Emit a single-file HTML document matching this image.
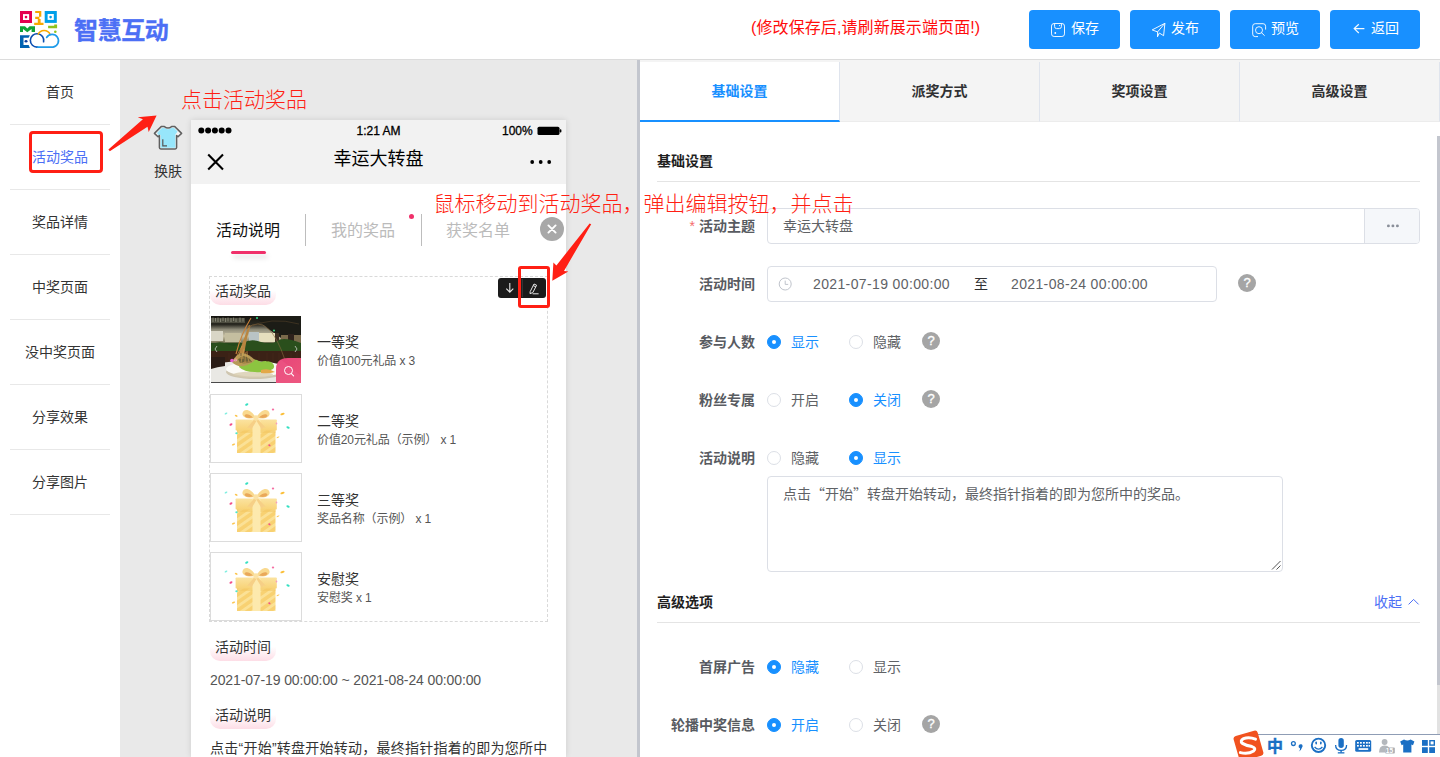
<!DOCTYPE html>
<html lang="zh-CN">
<head>
<meta charset="utf-8">
<title>智慧互动</title>
<style>
*{box-sizing:border-box;margin:0;padding:0}
html,body{width:1440px;height:757px;overflow:hidden;background:#fff}
body{font-family:"Liberation Sans","Noto Sans CJK SC",sans-serif;font-size:14px;color:#333;position:relative}
.abs{position:absolute}
/* header */
#hdr{position:absolute;left:0;top:0;width:1440px;height:60px;background:#fff;border-bottom:1px solid #dcdcdc}
#brand{position:absolute;left:74px;top:12px;height:38px;line-height:38px;font-size:24px;font-weight:700;color:#4c6ff5;letter-spacing:-0.4px;white-space:nowrap;-webkit-text-stroke:.35px #4c6ff5}
#tip{position:absolute;left:751px;top:17px;font-size:16px;line-height:22px;color:#ff0c0c;white-space:nowrap;letter-spacing:.1px}
.btn{position:absolute;top:10px;height:39px;width:90px;background:#1890ff;border-radius:4px;color:#fff;font-size:14px;line-height:36px;white-space:nowrap}
.btn svg{position:absolute;top:12px}
.btn span{position:absolute;top:0}
/* sidebar */
#side{position:absolute;left:0;top:60px;width:120px;height:697px;background:#fff}
#side .it{position:absolute;left:10px;width:100px;height:65px;border-bottom:1px solid #e8e8e8;text-align:center;line-height:64px;font-size:14px;color:#333;white-space:nowrap}
#side .it.on{color:#4c6ff5}
/* stage */
#stage{position:absolute;left:120px;top:60px;width:517px;height:697px;background:#e9e9e9}
#bar{position:absolute;left:637px;top:60px;width:3px;height:697px;background:#c3c6ce}
/* phone */
#phone{position:absolute;left:191px;top:120px;width:375px;height:637px;background:#fff;box-shadow:0 0 6px rgba(0,0,0,.12);overflow:hidden}
#ptop{position:absolute;left:0;top:0;width:375px;height:64px;background:#f2f2f2}
/* right panel */
#panel{position:absolute;left:640px;top:60px;width:800px;height:697px;background:#fff;overflow:hidden}
.tab{position:absolute;top:2px;width:200px;height:60px;background:#f4f4f4;border-right:1px solid #dfe4ed;border-bottom:1px solid #ececec;text-align:center;line-height:59px;font-size:14px;font-weight:700;color:#303133}
.tab.on{background:#fff;color:#1890ff;border-bottom:2px solid #1890ff}
.sec{position:absolute;left:17px;width:763px;border-bottom:1px solid #e4e4e4;font-size:14px;font-weight:700;color:#1f1f1f}
.lbl{position:absolute;left:0;width:115px;text-align:right;font-size:14px;font-weight:700;color:#585b61;line-height:20px;white-space:nowrap}
.rad{position:absolute;width:14px;height:14px;border-radius:50%;border:1px solid #dcdfe6;background:#fff}
.rad.on{border-color:#1890ff;background:#1890ff}
.rad.on:after{content:"";position:absolute;left:4px;top:4px;width:4px;height:4px;border-radius:50%;background:#fff}
.rl{position:absolute;font-size:14px;line-height:20px;color:#606266;white-space:nowrap}
.rl.on{color:#1890ff}
.q{position:absolute;width:18px;height:18px;border-radius:50%;background:#a5a5a5;color:#fff;font-size:13px;font-weight:400;-webkit-text-stroke:.3px #fff;text-align:center;line-height:18px}
.ptab{position:absolute;top:99px;font-size:16px;line-height:24px;white-space:nowrap}
.pill{position:absolute;height:24px;padding:0 5px;line-height:20px;font-size:14px;color:#333;white-space:nowrap;border-radius:10px;background:linear-gradient(to bottom,rgba(255,255,255,0) 40%,#fddde6 100%)}
.pt{position:absolute;left:126px;font-size:14px;line-height:18px;color:#333;white-space:nowrap}
.ps{position:absolute;left:126px;letter-spacing:-.1px;font-size:12px;line-height:16px;color:#555;white-space:nowrap}
.gbox{position:absolute;left:19px;width:92px;height:69px;border:1px solid #dcdcdc;background:#fff}
.dt{font-size:14px;line-height:20px;color:#606266;white-space:nowrap;letter-spacing:.37px}
.red{font-size:21px;line-height:28px;color:#ff1f14;white-space:nowrap;font-weight:300}
.cq{font-family:"Noto Sans CJK SC",sans-serif}
</style>
</head>
<body>
<svg width="0" height="0" style="position:absolute">
<defs>
<linearGradient id="gb" x1="0" y1="0" x2="0" y2="1"><stop offset="0" stop-color="#f7cf6e"/><stop offset="1" stop-color="#fbe092"/></linearGradient>
<linearGradient id="gl" x1="0" y1="0" x2="0" y2="1"><stop offset="0" stop-color="#fbe3a0"/><stop offset="1" stop-color="#f8d377"/></linearGradient>
<pattern id="gs" width="6.4" height="6.4" patternUnits="userSpaceOnUse" patternTransform="rotate(-35)"><rect width="6.4" height="6.4" fill="#f8d172"/><rect width="6.4" height="2.8" fill="#fbe196"/></pattern>
</defs></svg>
<!-- HEADER -->
<div id="hdr">
  <svg class="abs" style="left:19px;top:10px" width="42" height="40" viewBox="19 10 42 40">
    <rect x="20" y="11" width="12" height="12" fill="#e4004f"/><rect x="23" y="14.1" width="6.1" height="5.9" fill="#fff"/><circle cx="26" cy="17.1" r="1.3" fill="#e4004f"/>
    <rect x="44.7" y="11" width="12.1" height="11.9" fill="#00a0e9"/><rect x="47.6" y="14" width="6.2" height="5.9" fill="#fff"/><circle cx="50.6" cy="17.1" r="1.3" fill="#00a0e9"/>
    <path d="M35.2 11 H41.3 V16.8 H39 V13 H35.2 Z M35.2 16.8 H39.4 V18.9 H40.6 V22.8 H43.5 V25 H34.2 V22.8 H37.8 V19 H35.2 Z" fill="#f7a800"/>
    <path d="M20 26.2 H25 L27.3 28.6 L29.6 26.2 H35 V32.1 H31.6 V29 L27.3 32.3 L23 29 V32.1 H20 Z" fill="#10a337"/>
    <path d="M48.1 25.7 H54.2 V24.6 H57.1 V28.3 H48.1 Z" fill="#8fc31f"/><circle cx="55.3" cy="31.7" r="1.3" fill="#8fc31f"/>
    <path d="M20 35.3 H29.9 L28.6 37.8 H23.5 V45 H28.6 L29.9 47.9 H20 Z" fill="#0062b1"/><ellipse cx="26" cy="41.2" rx="1.5" ry="1.2" fill="#0b3c9c"/>
    <path d="M37.5 47.1 A6.7 6.7 0 1 1 43.6 41.8" stroke="#0a4db0" stroke-width="1.6" fill="none" stroke-linecap="round"/>
    <path d="M38 34.6 A6.6 6.6 0 0 1 50.2 34.6" stroke="#f7a800" stroke-width="1.5" fill="none"/>
    <path d="M46.6 37.5 A6.4 6.4 0 1 1 53 47.1 H37.5" stroke="#1e9be9" stroke-width="1.6" fill="none" stroke-linecap="round"/>
  </svg>
  <div id="brand">智慧互动</div>
  <div id="tip">(修改保存后,请刷新展示端页面!)</div>
  <div class="btn" style="left:1029px;width:91px"><svg style="left:21px" width="16" height="16" viewBox="0 0 16 16"><g stroke="#fff" stroke-width="1" fill="none" opacity=".92"><rect x="1.5" y="1.5" width="13" height="13" rx="2.6"/><path d="M4.6 1.5 V4.6 Q4.6 6.6 6.6 6.6 H9.4 Q11.4 6.6 11.4 4.6 V1.5"/></g><circle cx="5.3" cy="11" r=".9" fill="#fff"/><circle cx="9.6" cy="3.6" r=".6" fill="#fff"/></svg><span style="left:42px">保存</span></div>
  <div class="btn" style="left:1130px"><svg style="left:21px" width="16" height="16" viewBox="0 0 16 16"><path d="M13.9 1.3 L1.2 7.9 L6.6 9.9 M13.9 1.3 L6.6 9.9 L6.5 14.8 L8.3 11 M13.9 1.3 L12.6 13.7 L8.3 11" stroke="#fff" stroke-width="1" fill="none" stroke-linejoin="round" opacity=".92"/></svg><span style="left:41px">发布</span></div>
  <div class="btn" style="left:1230px"><svg style="left:21px" width="16" height="16" viewBox="0 0 16 16"><g stroke="#fff" stroke-width="1" fill="none" opacity=".92"><path d="M7 14.6 H4.2 Q1.7 14.6 1.7 12.1 V4.2 Q1.7 1.7 4.2 1.7 H12.1 Q14.6 1.7 14.6 4.2 V7.6"/><circle cx="8" cy="8.2" r="3.5"/><path d="M10.6 10.8 L13.4 13.5" stroke-linecap="round"/></g></svg><span style="left:41px">预览</span></div>
  <div class="btn" style="left:1330px"><svg style="left:22px" width="14" height="16" viewBox="0 0 14 16"><path d="M12.4 6.6 H2.2 M6.8 2.2 L2.2 6.6 L6.8 11" stroke="#fff" stroke-width="1.2" fill="none" opacity=".95"/></svg><span style="left:41px">返回</span></div>
</div>
<!-- SIDEBAR -->
<div id="side">
  <div class="it" style="top:0">首页</div>
  <div class="it on" style="top:65px">活动奖品</div>
  <div class="it" style="top:130px">奖品详情</div>
  <div class="it" style="top:195px">中奖页面</div>
  <div class="it" style="top:260px">没中奖页面</div>
  <div class="it" style="top:325px">分享效果</div>
  <div class="it" style="top:390px">分享图片</div>
</div>
<!-- STAGE -->
<div id="stage"></div>
<div id="bar"></div>
<div id="phone">
  <div id="ptop">
    <svg class="abs" style="left:6px;top:6px" width="38" height="10" viewBox="0 0 38 10"><g fill="#000"><circle cx="4.3" cy="4.6" r="3"/><circle cx="11.1" cy="4.6" r="3"/><circle cx="17.9" cy="4.6" r="3"/><circle cx="24.7" cy="4.6" r="3"/><circle cx="31.5" cy="4.6" r="3"/></g></svg>
    <div class="abs" style="left:0;top:3px;width:375px;text-align:center;font-size:12px;line-height:16px;color:#000;-webkit-text-stroke:0.3px #000">1:21 AM</div>
    <div class="abs" style="left:311px;top:3px;font-size:12px;line-height:16px;color:#000;-webkit-text-stroke:0.3px #000">100%</div>
    <svg class="abs" style="left:346px;top:6px" width="26" height="10" viewBox="0 0 26 10"><rect x="0.5" y="0.7" width="22" height="8.4" rx="1.6" fill="#000"/><rect x="22.6" y="3.2" width="1.8" height="3.4" rx="0.8" fill="#000"/></svg>
    <svg class="abs" style="left:16px;top:33px" width="18" height="18" viewBox="0 0 18 18"><path d="M1.2 1.6 L16 16.4 M16 1.6 L1.2 16.4" stroke="#000" stroke-width="2.1" fill="none"/></svg>
    <div class="abs" style="left:0;top:26px;width:375px;text-align:center;font-size:18px;line-height:26px;color:#000">幸运大转盘</div>
    <svg class="abs" style="left:338px;top:38px" width="24" height="8" viewBox="0 0 24 8"><g fill="#000"><circle cx="3.2" cy="4" r="1.9"/><circle cx="11.7" cy="4" r="1.9"/><circle cx="20.2" cy="4" r="1.9"/></g></svg>
  </div>
  <!-- tabs -->
  <div class="ptab" style="left:25px;color:#111">活动说明</div>
  <div class="ptab" style="left:140px;color:#bbb">我的奖品</div>
  <div class="ptab" style="left:255px;color:#bbb">获奖名单</div>
  <div class="abs" style="left:114px;top:94px;width:1px;height:32px;background:#bdbdbd"></div>
  <div class="abs" style="left:230px;top:94px;width:1px;height:32px;background:#bdbdbd"></div>
  <div class="abs" style="left:218px;top:94px;width:5px;height:5px;border-radius:50%;background:#f0306a"></div>
  <div class="abs" style="left:39.5px;top:131px;width:35px;height:3px;border-radius:2px;background:#f0306a;box-shadow:2px 4px 5px rgba(0,0,0,.13)"></div>
  <div class="abs" style="left:349px;top:97px;width:24px;height:24px;border-radius:50%;background:#a8a8a8"><svg width="24" height="24" viewBox="0 0 24 24" style="display:block"><path d="M8.4 8.4 L15.6 15.6 M15.6 8.4 L8.4 15.6" stroke="#fff" stroke-width="1.9" stroke-linecap="round"/></svg></div>
  <!-- prize block -->
  <div class="abs" style="left:18px;top:156px;width:339px;height:346px;border:1px dashed #d9d9d9"></div>
  <div class="pill" style="left:19px;top:161px">活动奖品</div>
  <div class="abs" style="left:307px;top:158px;width:48px;height:20px;border-radius:3px;background:#1b1b1b">
    <svg width="48" height="20" viewBox="0 0 48 20" style="display:block"><path d="M11.8 5 V14 M8.3 10.6 L11.8 14.1 L15.3 10.6" stroke="#e8e8e8" stroke-width="1.1" fill="none"/><path d="M24.3 1 V19" stroke="#3c3c3c" stroke-width="1"/><path d="M32.2 13.6 L36 6 L38.6 7.2 L34.8 14.6 L32 15.6 Z M35.2 7.6 L37.8 8.8" stroke="#e8e8e8" stroke-width="1" fill="none" stroke-linejoin="round"/><path d="M34.6 15.8 H40.6" stroke="#e8e8e8" stroke-width="1"/></svg>
  </div>
  <!-- item 1 -->
  <div class="abs" id="photo" style="left:20px;top:196px;width:90px;height:67px;overflow:hidden;background:#3a2a20">
<svg width="90" height="67" viewBox="0 0 90 67" style="display:block">
<defs>
<linearGradient id="pbg" x1="0" y1="0" x2="0" y2="1"><stop offset="0" stop-color="#15140f"/><stop offset=".13" stop-color="#2b2a22"/><stop offset=".2" stop-color="#8d8a78"/><stop offset=".3" stop-color="#c9c2a6"/><stop offset=".38" stop-color="#8a8468"/><stop offset=".44" stop-color="#2c4a1c"/><stop offset=".55" stop-color="#2a431b"/><stop offset=".6" stop-color="#3a241a"/><stop offset="1" stop-color="#2e1c14"/></linearGradient>
<linearGradient id="pk" x1="0" y1="0" x2="1" y2="1"><stop offset="0" stop-color="#e5457c"/><stop offset="1" stop-color="#ee5577"/></linearGradient>
<filter id="bl" x="-10%" y="-10%" width="120%" height="120%"><feGaussianBlur stdDeviation="0.7"/></filter>
</defs>
<rect width="90" height="67" fill="url(#pbg)"/>
<g filter="url(#bl)">
<rect x="0" y="2" width="34" height="5" fill="#6f6d5c" opacity=".55"/>
<path d="M44 0 H90 V22 H70 L56 12 Z" fill="#1d1b15"/>
<rect x="0" y="15" width="12" height="10" fill="#d9d6c6"/>
<rect x="14" y="17" width="16" height="9" fill="#c4bea0"/>
<rect x="38" y="16" width="10" height="12" fill="#b9c3c4"/>
<rect x="48" y="17" width="18" height="9" fill="#e6dfbe"/>
<rect x="64" y="17" width="4" height="16" fill="#3b2f22"/>
<rect x="70" y="19" width="20" height="10" fill="#7a6a4c"/>
<rect x="77" y="18" width="6" height="14" fill="#2f241a"/>
<rect x="0" y="27" width="90" height="9" fill="#27481b"/>
<path d="M0 29 Q8 24 16 28 T32 27 T50 26 T66 25 T90 27 V37 H0 Z" fill="#2a4f1d"/>
<rect x="0" y="35" width="90" height="12" fill="#3a2219"/>
<path d="M0 51 Q20 42 52 46 L90 56 V67 H0 Z" fill="#e9e8e4"/>
<path d="M0 41 H14 V50 Q6 51 0 53 Z" fill="#2a1d14"/>
<ellipse cx="44" cy="56" rx="29" ry="7" fill="#cfc6b0"/>
<ellipse cx="45" cy="53" rx="30" ry="7.5" fill="#fbfaf6"/>
<ellipse cx="42" cy="58.5" rx="20" ry="3" fill="#d8cdb0" opacity=".8"/>
<path d="M28 51 Q30 44 38 44 Q44 42 50 46 Q54 44 60 46 Q65 49 62 53 Q54 57 44 56 Q33 56 28 51 Z" fill="#8cc440"/>
<path d="M50 54 Q58 52 64 56 Q58 58 50 57 Z" fill="#e3a84a"/>
<path d="M27 41 Q30 30 34 20 Q36 14 38 9 L39.6 10 Q37 17 35.6 24 Q34 32 33 40 Z" fill="#b9853f"/>
<path d="M21 46 Q25 38 31 37 Q38 38 44 44 Q40 48 33 50 Q25 51 21 46 Z" fill="#b59a58"/>
<path d="M27 43 Q31 39 36 41 Q40 43 41 46 Q35 48 29 47 Z" fill="#6e6238"/>
<circle cx="21" cy="44.5" r="1.8" fill="#e65ad0"/><circle cx="24.5" cy="44" r="1.4" fill="#f3a0e6"/>
</g>
<g stroke="#a9a998" stroke-width=".8" opacity=".8"><path d="M2 1.5 V6 M4.5 2 V5.5 M7 1.5 V6 M9.6 2.5 V6 M12 1.5 V5 M14.6 2 V6 M17 1.5 V5.5 M20 2 V6 M22.6 1.5 V5 M25 2.5 V6 M29 1.5 V6 M32 2 V5.6"/></g>
<g stroke="#4a2c20" stroke-width=".6" opacity=".8"><path d="M18 37 V46 M30 37 V40 M48 37 V45 M56 37 V46 M62 37 V46 M68 37 V44 M80 37 V42 M86 37 V42"/></g>
<g stroke="#d0a050" stroke-width=".7" fill="none" opacity=".9"><path d="M24 46 Q27 36 31 30 M30 47 Q31 40 33 33 M34 47 Q34 41 35 36 M38 46 Q36 40 36 35 M22 44 Q28 41 33 42 M27 49 Q33 45 40 46"/></g>
<path d="M25 38 Q30 18 40 2" stroke="#c9813a" stroke-width="1.1" fill="none"/>
<path d="M36 12 Q58 -4 74 44" stroke="#8a6a40" stroke-width=".7" fill="none" opacity=".85"/>
<path d="M36 12 Q60 0 88 8" stroke="#6a5030" stroke-width=".6" fill="none" opacity=".7"/>
<circle cx="46" cy="2" r="1" fill="#35e08a"/><circle cx="63" cy="14.5" r="1" fill="#35d07a"/>
<path d="M6 30 L4 33 L6 36" stroke="#e8e8e8" stroke-width=".9" fill="none" opacity=".75"/>
<path d="M84 30 L86 33 L84 36" stroke="#e8e8e8" stroke-width=".9" fill="none" opacity=".75"/>
<rect x="0" y="66" width="90" height="1" fill="#4a4a4a"/>
<path d="M65 67 V54 Q65 42 77 42 H90 V67 Z" fill="url(#pk)"/>
<path d="M65 67 V54 Q65 46 70 43.6 L90 60 V67 Z" fill="#ec5a86" opacity=".55"/>
<circle cx="77.5" cy="54.5" r="4" stroke="#fff" stroke-width="1" fill="none"/><path d="M80.4 57.6 L82.6 59.8" stroke="#fff" stroke-width="1.1" stroke-linecap="round"/>
</svg></div>
  <div class="pt" style="top:213px">一等奖</div><div class="ps" style="top:233px">价值100元礼品 x 3</div>
  <div class="gbox" style="top:274px"><svg width="90" height="67" viewBox="0 0 90 67" style="display:block"><rect x="26" y="34" width="38.5" height="24" fill="url(#gs)"/>
  <rect x="26" y="34" width="38.5" height="4" fill="#f3c763" opacity=".55"/>
  <rect x="24.6" y="24.5" width="41.2" height="11" rx="0.8" fill="url(#gl)"/>
  <rect x="41.5" y="24.5" width="8" height="33.5" fill="#fde9ad"/>
  <path d="M45 23 C40 14 33 13 31.5 18 C30.5 22.5 37 24.5 45 23 Z" fill="#f9d98f"/>
  <path d="M45 23 C50 14 57 13 58.5 18 C59.5 22.5 53 24.5 45 23 Z" fill="#f9d98f"/>
  <path d="M42 22.5 C38 18.5 34.5 18.5 33.5 20.5 C34 23 38 23.5 42 22.5 Z" fill="#e9a85a"/>
  <path d="M48 22.5 C52 18.5 55.5 18.5 56.5 20.5 C56 23 52 23.5 48 22.5 Z" fill="#e9a85a"/>
  <path d="M43.5 24 L36 33 L39 32.5 L40 35 L46 25 Z" fill="#f6cf86"/>
  <path d="M46.5 24 L55 33 L52 32.5 L51 35 L45 25 Z" fill="#f6cf86"/>
  <ellipse cx="45" cy="23" rx="2.6" ry="2.8" fill="#fbe2a5"/>
  <g>
   <ellipse cx="35.8" cy="9.5" rx="1.7" ry="1" fill="#35e0c2" transform="rotate(-25 35.8 9.5)"/>
   <ellipse cx="15" cy="18.5" rx="1.5" ry=".8" fill="#7eeee0" transform="rotate(-25 15 18.5)"/>
   <ellipse cx="25.2" cy="20.8" rx="1.5" ry=".9" fill="#fbc54e" transform="rotate(25 25.2 20.8)"/>
   <ellipse cx="62" cy="14.5" rx="1.2" ry="1" fill="#f570a3"/>
   <ellipse cx="71.5" cy="19" rx="2.2" ry="1" fill="#fbbf3a" transform="rotate(-20 71.5 19)"/>
   <ellipse cx="20" cy="29.5" rx="1.6" ry="1" fill="#f2508c" transform="rotate(-25 20 29.5)"/>
   <ellipse cx="77" cy="32.5" rx="1.8" ry="1" fill="#35e0c2" transform="rotate(25 77 32.5)"/>
   <ellipse cx="25.5" cy="38.2" rx="1.2" ry="1" fill="#4fe6cc"/>
   <ellipse cx="67" cy="42.3" rx="1.6" ry=".6" fill="#fbc54e" transform="rotate(-25 67 42.3)"/>
   <ellipse cx="22.5" cy="49.5" rx="1.8" ry=".8" fill="#fbc54e" transform="rotate(-25 22.5 49.5)"/>
   <ellipse cx="58.4" cy="50.3" rx="1.2" ry=".9" fill="#f2508c" transform="rotate(30 58.4 50.3)"/>
   <ellipse cx="65.5" cy="28.5" rx=".8" ry="1" fill="#f79abf"/>
  </g></svg></div>
  <div class="pt" style="top:292px">二等奖</div><div class="ps" style="top:312px">价值20元礼品（示例） x 1</div>
  <div class="gbox" style="top:353px"><svg width="90" height="67" viewBox="0 0 90 67" style="display:block"><rect x="26" y="34" width="38.5" height="24" fill="url(#gs)"/>
  <rect x="26" y="34" width="38.5" height="4" fill="#f3c763" opacity=".55"/>
  <rect x="24.6" y="24.5" width="41.2" height="11" rx="0.8" fill="url(#gl)"/>
  <rect x="41.5" y="24.5" width="8" height="33.5" fill="#fde9ad"/>
  <path d="M45 23 C40 14 33 13 31.5 18 C30.5 22.5 37 24.5 45 23 Z" fill="#f9d98f"/>
  <path d="M45 23 C50 14 57 13 58.5 18 C59.5 22.5 53 24.5 45 23 Z" fill="#f9d98f"/>
  <path d="M42 22.5 C38 18.5 34.5 18.5 33.5 20.5 C34 23 38 23.5 42 22.5 Z" fill="#e9a85a"/>
  <path d="M48 22.5 C52 18.5 55.5 18.5 56.5 20.5 C56 23 52 23.5 48 22.5 Z" fill="#e9a85a"/>
  <path d="M43.5 24 L36 33 L39 32.5 L40 35 L46 25 Z" fill="#f6cf86"/>
  <path d="M46.5 24 L55 33 L52 32.5 L51 35 L45 25 Z" fill="#f6cf86"/>
  <ellipse cx="45" cy="23" rx="2.6" ry="2.8" fill="#fbe2a5"/>
  <g>
   <ellipse cx="35.8" cy="9.5" rx="1.7" ry="1" fill="#35e0c2" transform="rotate(-25 35.8 9.5)"/>
   <ellipse cx="15" cy="18.5" rx="1.5" ry=".8" fill="#7eeee0" transform="rotate(-25 15 18.5)"/>
   <ellipse cx="25.2" cy="20.8" rx="1.5" ry=".9" fill="#fbc54e" transform="rotate(25 25.2 20.8)"/>
   <ellipse cx="62" cy="14.5" rx="1.2" ry="1" fill="#f570a3"/>
   <ellipse cx="71.5" cy="19" rx="2.2" ry="1" fill="#fbbf3a" transform="rotate(-20 71.5 19)"/>
   <ellipse cx="20" cy="29.5" rx="1.6" ry="1" fill="#f2508c" transform="rotate(-25 20 29.5)"/>
   <ellipse cx="77" cy="32.5" rx="1.8" ry="1" fill="#35e0c2" transform="rotate(25 77 32.5)"/>
   <ellipse cx="25.5" cy="38.2" rx="1.2" ry="1" fill="#4fe6cc"/>
   <ellipse cx="67" cy="42.3" rx="1.6" ry=".6" fill="#fbc54e" transform="rotate(-25 67 42.3)"/>
   <ellipse cx="22.5" cy="49.5" rx="1.8" ry=".8" fill="#fbc54e" transform="rotate(-25 22.5 49.5)"/>
   <ellipse cx="58.4" cy="50.3" rx="1.2" ry=".9" fill="#f2508c" transform="rotate(30 58.4 50.3)"/>
   <ellipse cx="65.5" cy="28.5" rx=".8" ry="1" fill="#f79abf"/>
  </g></svg></div>
  <div class="pt" style="top:371px">三等奖</div><div class="ps" style="top:391px">奖品名称（示例） x 1</div>
  <div class="gbox" style="top:432px"><svg width="90" height="67" viewBox="0 0 90 67" style="display:block"><rect x="26" y="34" width="38.5" height="24" fill="url(#gs)"/>
  <rect x="26" y="34" width="38.5" height="4" fill="#f3c763" opacity=".55"/>
  <rect x="24.6" y="24.5" width="41.2" height="11" rx="0.8" fill="url(#gl)"/>
  <rect x="41.5" y="24.5" width="8" height="33.5" fill="#fde9ad"/>
  <path d="M45 23 C40 14 33 13 31.5 18 C30.5 22.5 37 24.5 45 23 Z" fill="#f9d98f"/>
  <path d="M45 23 C50 14 57 13 58.5 18 C59.5 22.5 53 24.5 45 23 Z" fill="#f9d98f"/>
  <path d="M42 22.5 C38 18.5 34.5 18.5 33.5 20.5 C34 23 38 23.5 42 22.5 Z" fill="#e9a85a"/>
  <path d="M48 22.5 C52 18.5 55.5 18.5 56.5 20.5 C56 23 52 23.5 48 22.5 Z" fill="#e9a85a"/>
  <path d="M43.5 24 L36 33 L39 32.5 L40 35 L46 25 Z" fill="#f6cf86"/>
  <path d="M46.5 24 L55 33 L52 32.5 L51 35 L45 25 Z" fill="#f6cf86"/>
  <ellipse cx="45" cy="23" rx="2.6" ry="2.8" fill="#fbe2a5"/>
  <g>
   <ellipse cx="35.8" cy="9.5" rx="1.7" ry="1" fill="#35e0c2" transform="rotate(-25 35.8 9.5)"/>
   <ellipse cx="15" cy="18.5" rx="1.5" ry=".8" fill="#7eeee0" transform="rotate(-25 15 18.5)"/>
   <ellipse cx="25.2" cy="20.8" rx="1.5" ry=".9" fill="#fbc54e" transform="rotate(25 25.2 20.8)"/>
   <ellipse cx="62" cy="14.5" rx="1.2" ry="1" fill="#f570a3"/>
   <ellipse cx="71.5" cy="19" rx="2.2" ry="1" fill="#fbbf3a" transform="rotate(-20 71.5 19)"/>
   <ellipse cx="20" cy="29.5" rx="1.6" ry="1" fill="#f2508c" transform="rotate(-25 20 29.5)"/>
   <ellipse cx="77" cy="32.5" rx="1.8" ry="1" fill="#35e0c2" transform="rotate(25 77 32.5)"/>
   <ellipse cx="25.5" cy="38.2" rx="1.2" ry="1" fill="#4fe6cc"/>
   <ellipse cx="67" cy="42.3" rx="1.6" ry=".6" fill="#fbc54e" transform="rotate(-25 67 42.3)"/>
   <ellipse cx="22.5" cy="49.5" rx="1.8" ry=".8" fill="#fbc54e" transform="rotate(-25 22.5 49.5)"/>
   <ellipse cx="58.4" cy="50.3" rx="1.2" ry=".9" fill="#f2508c" transform="rotate(30 58.4 50.3)"/>
   <ellipse cx="65.5" cy="28.5" rx=".8" ry="1" fill="#f79abf"/>
  </g></svg></div>
  <div class="pt" style="top:450px">安慰奖</div><div class="ps" style="top:470px">安慰奖 x 1</div>
  <div class="pill" style="left:19px;top:517px">活动时间</div>
  <div class="abs" style="left:19px;top:550px;font-size:14px;line-height:20px;color:#555;white-space:nowrap;letter-spacing:-.12px">2021-07-19 00:00:00 ~ 2021-08-24 00:00:00</div>
  <div class="pill" style="left:19px;top:585px">活动说明</div>
  <div class="abs" style="left:19px;top:618px;font-size:14px;line-height:20px;color:#333;white-space:nowrap;letter-spacing:.25px">点击“开始”转盘开始转动，最终指针指着的即为您所中</div>
</div>
<!-- PANEL -->
<div id="panel">
  <div class="abs" style="left:0;top:0;width:800px;height:62px;background:#f4f4f4"></div>
  <div class="tab on" style="left:0">基础设置</div>
  <div class="tab" style="left:200px">派奖方式</div>
  <div class="tab" style="left:400px">奖项设置</div>
  <div class="tab" style="left:600px">高级设置</div>
  <!-- section 1 -->
  <div class="sec" style="top:91px;height:31px;line-height:20px">基础设置</div>
  <!-- row: 活动主题 -->
  <div class="lbl" style="top:156px"><span style="color:#f56c6c;font-weight:400;margin-right:4px">*</span>活动主题</div>
  <div class="abs" style="left:127px;top:148px;width:653px;height:36px;border:1px solid #dcdfe6;border-radius:4px;background:#fff;overflow:hidden">
    <div class="abs" style="left:15px;top:7px;font-size:14px;line-height:20px;color:#606266">幸运大转盘</div>
    <div class="abs" style="right:0;top:0;width:55px;height:34px;background:#f5f7fa;border-left:1px solid #dcdfe6"><svg width="54" height="34" style="display:block"><g fill="#8a8f99"><circle cx="23.4" cy="16.9" r="1.45"/><circle cx="27.9" cy="16.9" r="1.45"/><circle cx="32.4" cy="16.9" r="1.45"/></g></svg></div>
  </div>
  <!-- row: 活动时间 -->
  <div class="lbl" style="top:214px">活动时间</div>
  <div class="abs" style="left:127px;top:206px;width:450px;height:36px;border:1px solid #dcdfe6;border-radius:4px;background:#fff">
    <svg class="abs" style="left:9px;top:9px" width="16" height="16" viewBox="0 0 16 16"><circle cx="8.2" cy="8" r="6" stroke="#c0c4cc" stroke-width="1" fill="none"/><path d="M8.2 4.6 V8.4 H11.2" stroke="#c0c4cc" stroke-width="1" fill="none"/></svg>
    <div class="abs dt" style="left:45px;top:7px">2021-07-19 00:00:00</div>
    <div class="abs" style="left:206px;top:7px;font-size:14px;line-height:20px;color:#303133">至</div>
    <div class="abs dt" style="left:243px;top:7px">2021-08-24 00:00:00</div>
  </div>
  <div class="q" style="left:598px;top:214px">?</div>
  <!-- row: 参与人数 -->
  <div class="lbl" style="top:272px">参与人数</div>
  <div class="rad on" style="left:127px;top:275px"></div><div class="rl on" style="left:151px;top:272px">显示</div>
  <div class="rad" style="left:209px;top:275px"></div><div class="rl" style="left:233px;top:272px">隐藏</div>
  <div class="q" style="left:282px;top:272px">?</div>
  <!-- row: 粉丝专属 -->
  <div class="lbl" style="top:330px">粉丝专属</div>
  <div class="rad" style="left:127px;top:333px"></div><div class="rl" style="left:151px;top:330px">开启</div>
  <div class="rad on" style="left:209px;top:333px"></div><div class="rl on" style="left:233px;top:330px">关闭</div>
  <div class="q" style="left:282px;top:330px">?</div>
  <!-- row: 活动说明 -->
  <div class="lbl" style="top:388px">活动说明</div>
  <div class="rad" style="left:127px;top:391px"></div><div class="rl" style="left:151px;top:388px">隐藏</div>
  <div class="rad on" style="left:209px;top:391px"></div><div class="rl on" style="left:233px;top:388px">显示</div>
  <div class="abs" style="left:127px;top:416px;width:516px;height:96px;border:1px solid #dcdfe6;border-radius:4px;background:#fff">
    <div class="abs" style="left:15px;top:6px;font-size:14px;line-height:21px;color:#606266;white-space:nowrap">点击<span class="cq">“</span>开始<span class="cq">”</span>转盘开始转动，最终指针指着的即为您所中的奖品。</div>
    <svg class="abs" style="right:1px;bottom:1px" width="10" height="10" viewBox="0 0 10 10"><path d="M9.5 1 L1 9.5 M9.5 5.5 L5.5 9.5" stroke="#555" stroke-width="1" fill="none"/></svg>
  </div>
  <!-- section 2 -->
  <div class="sec" style="top:532px;height:31px;line-height:20px">高级选项</div>
  <div class="abs" style="left:734px;top:532px;font-size:14px;line-height:20px;color:#4c6ff5;white-space:nowrap">收起</div>
  <svg class="abs" style="left:767px;top:536px" width="14" height="12" viewBox="0 0 14 12"><path d="M1.6 8.4 L6.6 3.4 L11.6 8.4" stroke="#4c6ff5" stroke-width="1" fill="none"/></svg>
  <!-- row: 首屏广告 -->
  <div class="lbl" style="top:597px">首屏广告</div>
  <div class="rad on" style="left:127px;top:600px"></div><div class="rl on" style="left:151px;top:597px">隐藏</div>
  <div class="rad" style="left:209px;top:600px"></div><div class="rl" style="left:233px;top:597px">显示</div>
  <!-- row: 轮播中奖信息 -->
  <div class="lbl" style="top:655px">轮播中奖信息</div>
  <div class="rad on" style="left:127px;top:658px"></div><div class="rl on" style="left:151px;top:655px">开启</div>
  <div class="rad" style="left:209px;top:658px"></div><div class="rl" style="left:233px;top:655px">关闭</div>
  <div class="q" style="left:282px;top:655px">?</div>
  <!-- scrollbar -->
  <div class="abs" style="left:797px;top:76px;width:3px;height:621px;background:#e2e2e2"></div><div class="abs" style="left:797px;top:76px;width:3px;height:549px;background:#c3c6ce"></div>
</div>
<!-- ANNOTATIONS -->
<div class="abs" style="left:29px;top:131px;width:74px;height:42px;border:3px solid #ff1f14;border-radius:4px"></div>
<svg class="abs" style="left:100px;top:110px" width="64" height="48" viewBox="100 110 64 48"><path d="M108.4 149.6 L142.9 119.3 L137.7 117.3 L156.6 115.5 L148.7 132.1 L147.5 126.7 L109.8 151.3 Z" fill="#ff1f14"/></svg>
<div class="abs red" style="left:181px;top:86px">点击活动奖品</div>
<div class="abs red" style="left:433.5px;top:190px">鼠标移动到活动奖品，弹出编辑按钮，并点击</div>
<div class="abs" style="left:518px;top:266px;width:32px;height:42px;border:3px solid #ff1f14;border-radius:3px"></div>
<svg class="abs" style="left:548px;top:220px" width="48" height="66" viewBox="548 220 48 66"><path d="M589.6 223.6 L556.4 265.4 L553.4 262.4 L552.3 280.7 L568.3 271.6 L564 270.9 L591.2 224.2 Z" fill="#ff1f14"/></svg>
<!-- skin -->
<svg class="abs" style="left:153px;top:125px" width="30" height="26" viewBox="0 0 30 26"><path d="M8.2 1.6 L11.4 1.6 Q15 4.4 18.6 1.6 L21.8 1.6 L28.6 8.4 L25 11.8 L23.6 10.6 V22.6 Q23.6 24 22.2 24 H7.8 Q6.4 24 6.4 22.6 V10.6 L5 11.8 L1.4 8.4 Z" fill="#f4f4f4"/><path d="M4 8 L8.8 3 L11.2 2.8 Q15 5.6 18.8 2.8 L21.2 3 L24.6 6.6 L22.4 9.4 V22.8 H7.6 V10 L5.8 10.6 Z" fill="#97e6fb"/><path d="M8.2 1.6 L11.4 1.6 Q15 4.4 18.6 1.6 L21.8 1.6 L28.6 8.4 L25 11.8 L23.6 10.6 V22.6 Q23.6 24 22.2 24 H7.8 Q6.4 24 6.4 22.6 V10.6 L5 11.8 L1.4 8.4 Z" fill="none" stroke="#606060" stroke-width="1.5" stroke-linejoin="round"/><path d="M9.8 14.2 V20.8 H14" stroke="#555" stroke-width="1.2" fill="none"/></svg>
<div class="abs" style="left:154px;top:161px;font-size:14px;line-height:20px;color:#333;white-space:nowrap">换肤</div>
<!-- IME -->
<div class="abs" style="left:1257px;top:734px;width:183px;height:23px;background:#fff;border-top:1px solid #8f9db5"></div>
<svg class="abs" style="left:1230px;top:728px" width="36" height="29" viewBox="1230 728 36 29"><rect x="1236" y="733" width="25" height="26" rx="3" fill="#f1521f" transform="rotate(-16 1248 746)"/><path d="M1255.5 739.2 Q1249 736.4 1243.6 738.6 Q1239.6 740.6 1242.4 743.4 Q1246 745.6 1252 746.6 Q1256.6 748 1253.6 751 Q1248 754.6 1240.4 752.6" stroke="#fff" stroke-width="3" fill="none" stroke-linecap="round"/></svg>
<div class="abs" style="left:1267px;top:735px;font-size:16px;line-height:23px;font-weight:700;color:#1b6fc4;-webkit-text-stroke:.4px #1b6fc4">中</div>
<svg class="abs" style="left:1288px;top:736px" width="150" height="20" viewBox="1288 736 150 20"><g fill="#1b6fc4"><circle cx="1293.4" cy="743.6" r="1.9" fill="none" stroke="#1b6fc4" stroke-width="1.3"/><path d="M1298.6 746 a2 2 0 1 1 3.4 1.6 q-.6 2.8 -3.2 4 q1.6 -1.8 1.2 -3.4 a2 2 0 0 1 -1.4 -2.2 Z"/>
<circle cx="1318.5" cy="745.3" r="6.7" fill="none" stroke="#1b6fc4" stroke-width="1.9"/><rect x="1315.4" y="741.4" width="1.6" height="3.2" rx=".8"/><rect x="1320" y="741.4" width="1.6" height="3.2" rx=".8"/><path d="M1314.6 747 Q1318.5 751.4 1322.4 747" stroke="#1b6fc4" stroke-width="1.3" fill="none"/>
<rect x="1338.4" y="738" width="5.4" height="10" rx="2.7"/><path d="M1335.6 745 Q1335.6 750.4 1341.1 750.4 Q1346.6 750.4 1346.6 745" stroke="#1b6fc4" stroke-width="1.3" fill="none"/><rect x="1340.4" y="750" width="1.4" height="2.6"/><rect x="1337.8" y="752.2" width="6.6" height="1.3"/>
<rect x="1355.2" y="740" width="16" height="11.8" rx="1.6"/>
<g fill="#fff"><rect x="1357" y="742" width="1.8" height="1.6"/><rect x="1360" y="742" width="1.8" height="1.6"/><rect x="1363" y="742" width="1.8" height="1.6"/><rect x="1366" y="742" width="1.8" height="1.6"/><rect x="1368.6" y="742" width="1.4" height="1.6"/><rect x="1357" y="745" width="1.8" height="1.6"/><rect x="1360" y="745" width="1.8" height="1.6"/><rect x="1363" y="745" width="1.8" height="1.6"/><rect x="1366" y="745" width="1.8" height="1.6"/><rect x="1368.6" y="745" width="1.4" height="1.6"/><rect x="1358.6" y="748.2" width="9.6" height="1.7"/></g>
<g fill="#b4b8bd"><circle cx="1384.6" cy="742" r="2.9"/><path d="M1379 752.6 Q1379 745.6 1384.6 745.6 Q1388.4 745.6 1389.6 748.6 H1385 V752.6 Z"/><rect x="1385.2" y="747.6" width="9.6" height="6" rx=".8" fill="#a9adb3"/></g><text x="1385.8" y="753" font-size="6.5" font-weight="700" fill="#fff" font-family="Liberation Sans,sans-serif">15</text>
<path d="M1404 739.4 Q1407.4 741.6 1410.6 739.4 L1414.4 741.6 L1413 745.2 L1411.4 744.6 V752.6 H1403.2 V744.6 L1401.6 745.2 L1400.2 741.6 Z"/>
<rect x="1422" y="740" width="5.8" height="5.8"/><rect x="1429.2" y="740" width="5.8" height="5.8"/><rect x="1422" y="747.2" width="5.8" height="5.8"/><rect x="1429.2" y="747.2" width="5.8" height="5.8"/><rect x="1430.6" y="741.4" width="3" height="3" fill="#fff"/>
</g></svg>
</body>
</html>
